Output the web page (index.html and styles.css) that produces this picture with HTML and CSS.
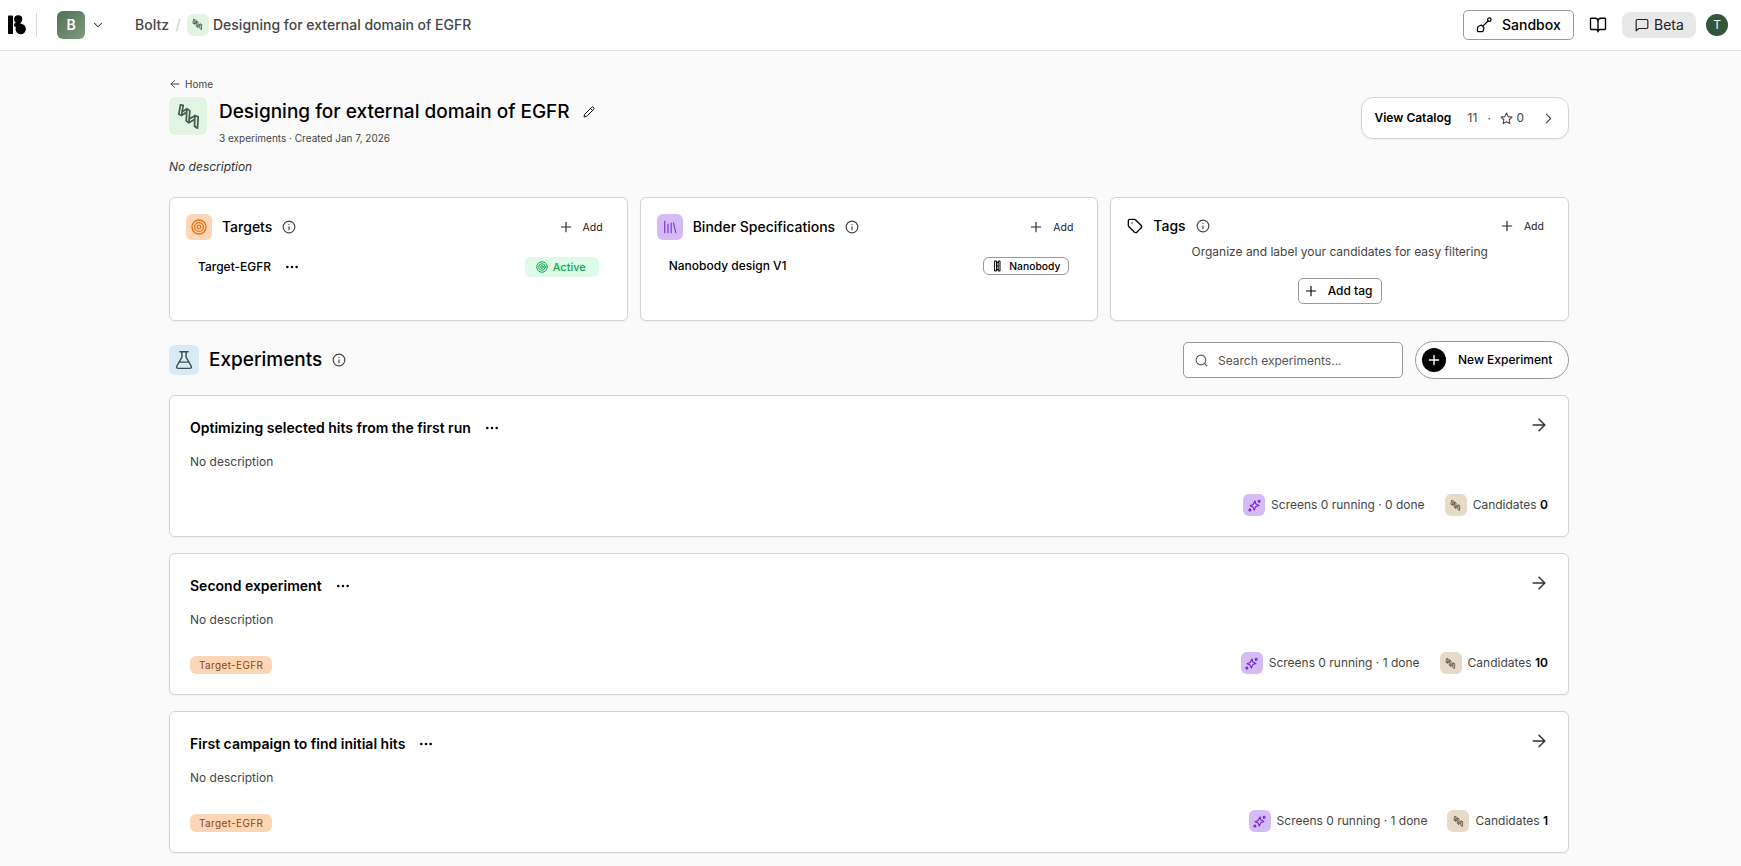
FILE: index.html
```html
<!DOCTYPE html>
<html lang="en">
<head>
  <meta charset="UTF-8">
  <meta name="viewport" content="width=device-width, initial-scale=1.0">
  <title>Designing for external domain of EGFR - Boltz</title>
  <link rel="stylesheet" href="styles.css">
</head>
<body>

  <!-- Icon set -->
  <svg class="sprite">
    <symbol id="i-helix" viewBox="0 0 24 24">
      <path d="M4.300 .8l2.600.6L5.300 11 2.700 9.800zM5.600 7.800l4.800-3.200M5.300 11l4.700-3M10.400 4.600l2.900 2-1 11.500-2.500-1.900zM13 14.200l5.100-3M12.300 18.100l5-3M18.100 11l3.200 1.300-.7 10.900-2.800-1.900z"/>
    </symbol>
    <symbol id="i-info" viewBox="0 0 24 24"><circle cx="12" cy="12" r="10"/><path d="M12 16.500V11.500M12 7.500h.01"/></symbol>
    <symbol id="i-plus" viewBox="0 0 24 24"><path d="M5 12h14M12 5v14"/></symbol>
    <symbol id="i-dots" viewBox="0 0 24 24"><circle cx="4" cy="12" r="1.200"/><circle cx="12" cy="12" r="1.200"/><circle cx="20" cy="12" r="1.200"/></symbol>
    <symbol id="i-target" viewBox="0 0 24 24"><circle cx="12" cy="12" r="10.500"/><circle cx="12" cy="12" r="6.600"/><circle cx="12" cy="12" r="2.700"/></symbol>
    <symbol id="i-arrow" viewBox="0 0 24 24"><path d="M5 12h14M12 5l7 7-7 7"/></symbol>
    <symbol id="i-spark" viewBox="0 0 24 24">
      <path d="M13 3.500l1 4.500a2 2 0 0 0 1.500 1.500L20 12l-4.500 1.500a2 2 0 0 0-1.500 1.500L11.500 20.500 10 16a2 2 0 0 0-1.500-1.500L4 12.500 8.500 10.500A2 2 0 0 0 10 9z"/>
      <circle cx="20.500" cy="4" r="1.800"/><circle cx="3.500" cy="20.500" r="1.800"/>
    </symbol>
  </svg>

  <header class="topbar">
    <svg class="logo" viewBox="0 0 18 20"><rect x="0" y="0.500" width="5" height="18.500" rx="0.800"/><circle cx="10.200" cy="4.300" r="4.100"/><circle cx="12.700" cy="14" r="5.200"/><circle cx="7.800" cy="10" r="1.900"/><path d="M8 6h4l1 4-4 3-1.500-2z"/></svg>
    <div class="divider"></div>
    <div class="org">B</div>
    <svg class="icon caret" viewBox="0 0 24 24"><path d="M5 8.500l7 7 7-7"/></svg>
    <nav class="crumbs">
      <span class="crumb-org">Boltz</span>
      <span class="slash">/</span>
      <span class="tile tile-sm green"><svg class="icon"><use href="#i-helix"/></svg></span>
      <span class="crumb-name">Designing for external domain of EGFR</span>
    </nav>
    <button class="sandbox">
      <svg class="icon" viewBox="0 0 24 24"><circle cx="20" cy="4" r="2.600"/><path d="M18 6l-7 7M8 12l4 4-1 4.500a2 2 0 0 1-1.500 1.500H4a2 2 0 0 1-2-2l.5-4A2 2 0 0 1 4 14z"/></svg>
      <span>Sandbox</span>
    </button>
    <svg class="icon book" viewBox="0 0 24 24"><path d="M12 7v14M3 18a1 1 0 0 1-1-1V4a1 1 0 0 1 1-1h5a4 4 0 0 1 4 4 4 4 0 0 1 4-4h5a1 1 0 0 1 1 1v13a1 1 0 0 1-1 1h-6a3 3 0 0 0-3 3 3 3 0 0 0-3-3z"/></svg>
    <button class="beta">
      <svg class="icon" viewBox="0 0 24 24"><path d="M22 16a2 2 0 0 1-2 2H6.500L2 22V4.500a2 2 0 0 1 2-2h16a2 2 0 0 1 2 2z"/></svg>
      <span>Beta</span>
    </button>
    <div class="avatar">T</div>
  </header>

  <main class="page">
    <a class="back"><svg class="icon" viewBox="0 0 24 24"><path d="M20 12H4M11 5l-7 7 7 7"/></svg><span>Home</span></a>

    <section class="project">
      <span class="tile tile-lg green"><svg class="icon"><use href="#i-helix"/></svg></span>
      <div class="project-info">
        <div class="project-title">
          <h1>Designing for external domain of EGFR</h1>
          <svg class="icon pencil" viewBox="0 0 24 24"><path d="M21.200 6.800a2.800 2.800 0 0 0-4-4L3.800 16.200a2 2 0 0 0-.5.8L2 21.400a.5.5 0 0 0 .6.600L7 20.700a2 2 0 0 0 .8-.5zM15 5l4 4"/></svg>
        </div>
        <p>3 experiments · Created Jan 7, 2026</p>
      </div>
      <button class="catalog">
        <strong>View Catalog</strong>
        <span class="cat-count">11</span>
        <span class="cat-dot">·</span>
        <svg class="icon star" viewBox="0 0 24 24"><path d="M12 2l3 6.500 7 .9-5.100 4.900 1.300 7.100L12 18l-6.200 3.400 1.300-7.100L2 9.400l7-.9z"/></svg>
        <span class="cat-stars">0</span>
        <svg class="icon next" viewBox="0 0 24 24"><path d="M8 4l8 8-8 8"/></svg>
      </button>
    </section>

    <p class="description">No description</p>

    <section class="panels">
      <div class="card panel">
        <div class="panel-head">
          <span class="tile tile-md orange"><svg class="icon"><use href="#i-target"/></svg></span>
          <h2>Targets</h2>
          <svg class="icon info"><use href="#i-info"/></svg>
          <button class="add"><svg class="icon"><use href="#i-plus"/></svg><span>Add</span></button>
        </div>
        <div class="panel-row">
          <span class="row-name">Target-EGFR</span>
          <svg class="icon dots"><use href="#i-dots"/></svg>
          <span class="active"><svg class="icon"><use href="#i-target"/></svg><span>Active</span></span>
        </div>
      </div>

      <div class="card panel">
        <div class="panel-head">
          <span class="tile tile-md purple"><svg class="icon books" viewBox="0 0 24 24"><path d="M3 2v20M8.500 7v15M14 5v17M18 5l4 17"/></svg></span>
          <h2>Binder Specifications</h2>
          <svg class="icon info"><use href="#i-info"/></svg>
          <button class="add"><svg class="icon"><use href="#i-plus"/></svg><span>Add</span></button>
        </div>
        <div class="panel-row spec-row">
          <span class="row-name">Nanobody design V1</span>
          <span class="nanobody"><svg class="icon" viewBox="0 0 14 24"><path d="M2 2h3v20H2zM9 2h3v20H9zM5 5h4M5 12h4M5 19h4"/></svg><span>Nanobody</span></span>
        </div>
      </div>

      <div class="card panel">
        <div class="panel-head tags-head">
          <svg class="icon tag" viewBox="0 0 24 24"><path d="M12.600 2.600A2 2 0 0 0 11.200 2H4a2 2 0 0 0-2 2v7.200a2 2 0 0 0 .6 1.400l8.700 8.700a2.400 2.400 0 0 0 3.400 0l6.600-6.600a2.400 2.400 0 0 0 0-3.400zM7.500 7.500h.01"/></svg>
          <h2>Tags</h2>
          <svg class="icon info"><use href="#i-info"/></svg>
          <button class="add"><svg class="icon"><use href="#i-plus"/></svg><span>Add</span></button>
        </div>
        <p class="tags-text">Organize and label your candidates for easy filtering</p>
        <button class="add-tag"><svg class="icon"><use href="#i-plus"/></svg><span>Add tag</span></button>
      </div>
    </section>

    <section class="exp-head">
      <span class="tile tile-flask blue"><svg class="icon" viewBox="0 0 24 24"><path d="M7 2h10M9.500 2v6.500L3.300 19.500a1.700 1.700 0 0 0 1.500 2.500h14.400a1.700 1.700 0 0 0 1.500-2.500L14.500 8.500V2M6.300 14.500h11.400"/></svg></span>
      <h2>Experiments</h2>
      <svg class="icon info"><use href="#i-info"/></svg>
      <div class="search">
        <svg class="icon" viewBox="0 0 24 24"><circle cx="11" cy="11" r="9"/><path d="M22 22l-4.600-4.600"/></svg>
        <span>Search experiments...</span>
      </div>
      <button class="new-exp"><span class="new-plus"><svg class="icon"><use href="#i-plus"/></svg></span><span class="new-label">New Experiment</span></button>
    </section>

    <section class="experiments">
      <article class="card exp">
        <div class="exp-top"><h3>Optimizing selected hits from the first run</h3><svg class="icon dots"><use href="#i-dots"/></svg><svg class="icon go"><use href="#i-arrow"/></svg></div>
        <p>No description</p>
        <div class="exp-foot">
          <div class="stats">
            <span class="tile tile-sm purple"><svg class="icon spark"><use href="#i-spark"/></svg></span>
            <span class="screens">Screens 0 running · 0 done</span>
            <span class="tile tile-sm tan"><svg class="icon"><use href="#i-helix"/></svg></span>
            <span class="cands">Candidates <b>0</b></span>
          </div>
        </div>
      </article>

      <article class="card exp">
        <div class="exp-top"><h3>Second experiment</h3><svg class="icon dots"><use href="#i-dots"/></svg><svg class="icon go"><use href="#i-arrow"/></svg></div>
        <p>No description</p>
        <div class="exp-foot">
          <span class="target-badge">Target-EGFR</span>
          <div class="stats">
            <span class="tile tile-sm purple"><svg class="icon spark"><use href="#i-spark"/></svg></span>
            <span class="screens">Screens 0 running · 1 done</span>
            <span class="tile tile-sm tan"><svg class="icon"><use href="#i-helix"/></svg></span>
            <span class="cands">Candidates <b>10</b></span>
          </div>
        </div>
      </article>

      <article class="card exp">
        <div class="exp-top"><h3>First campaign to find initial hits</h3><svg class="icon dots"><use href="#i-dots"/></svg><svg class="icon go"><use href="#i-arrow"/></svg></div>
        <p>No description</p>
        <div class="exp-foot">
          <span class="target-badge">Target-EGFR</span>
          <div class="stats">
            <span class="tile tile-sm purple"><svg class="icon spark"><use href="#i-spark"/></svg></span>
            <span class="screens">Screens 0 running · 1 done</span>
            <span class="tile tile-sm tan"><svg class="icon"><use href="#i-helix"/></svg></span>
            <span class="cands">Candidates <b>1</b></span>
          </div>
        </div>
      </article>
    </section>
  </main>

</body>
</html>
```
FILE: styles.css
```css
/* Global Styles */
* {
  box-sizing: border-box;
}

body {
  margin: 0;
  height: 866px;
  overflow: hidden;
  background: #fafafa;
  color: #000;
  font-family: Inter, sans-serif;
  font-size: 12px;
}

h1, h2, h3, p {
  margin: 0;
  white-space: nowrap;
}

span, strong {
  white-space: nowrap;
}

button {
  display: flex;
  align-items: center;
  padding: 0;
  border: none;
  background: #fff;
  color: #000;
  font-family: inherit;
}

.sprite {
  display: none;
}

.icon {
  flex: none;
  width: 16px;
  height: 16px;
  fill: none;
  stroke: currentColor;
  stroke-width: 2;
  stroke-linecap: round;
  stroke-linejoin: round;
}

/* Coloured icon tiles */
.tile {
  display: flex;
  flex: none;
  align-items: center;
  justify-content: center;
  border-radius: 6px;
}

.tile-sm {
  width: 22px;
  height: 22px;
}

.tile-sm .icon {
  width: 11px;
  height: 11px;
}

.tile-sm .spark {
  width: 13px;
  height: 13px;
}

.tile-md {
  width: 26px;
  height: 26px;
}

.tile-md .books {
  width: 14px;
  height: 14px;
  stroke-width: 1.700;
}

.tile-lg {
  width: 38px;
  height: 38px;
}

.tile-lg .icon {
  width: 25px;
  height: 25px;
  stroke-width: 1.700;
}

.tile-flask {
  width: 30px;
  height: 30px;
}

.tile-flask .icon {
  width: 20px;
  height: 20px;
  stroke-width: 1.700;
}

.green { background: #e3f4e3; color: #46604b; }
.orange { background: #ffd6b5; color: #ea7317; }
.purple { background: #d5bbf4; color: #6d1fd0; }
.blue { background: #d8ebf3; color: #3f4c52; }
.tan { background: #e6dac9; color: #65584a; }

/* Top bar */
.topbar {
  display: flex;
  align-items: center;
  height: 51px;
  padding: 0 13px 1px 8px;
  border-bottom: 1px solid #e4e4e4;
  background: #fff;
}

.logo {
  width: 18px;
  height: 20px;
  margin-top: 1px;
  fill: #000;
}

.divider {
  width: 1px;
  height: 24px;
  margin: 0 20px 0 10px;
  background: #d9d9d9;
}

.org {
  width: 28px;
  height: 28px;
  border-radius: 6px;
  background: linear-gradient(135deg, #4f7153, #7d9a80);
  color: #fff;
  font-size: 14px;
  font-weight: 600;
  line-height: 28px;
  text-align: center;
}

.caret {
  width: 12px;
  height: 12px;
  margin: 0 31px 0 7px;
}

.crumbs {
  display: flex;
  align-items: center;
  color: #454545;
  font-size: 14px;
  font-weight: 500;
}

.slash {
  width: 18px;
  color: #d0d0d0;
  text-align: center;
}

.crumb-name {
  margin-left: 4px;
}

.sandbox {
  width: 111px;
  height: 30px;
  margin-left: auto;
  padding-left: 12px;
  border: 1px solid #999;
  border-radius: 5px;
  font-size: 14px;
  font-weight: 500;
}

.sandbox .icon {
  stroke-width: 1.800;
}

.sandbox span {
  margin-left: 10px;
}

.book {
  width: 18px;
  height: 18px;
  margin: 0 15px;
  stroke-width: 1.800;
}

.beta {
  width: 74px;
  height: 26px;
  margin-right: 10px;
  padding-left: 13px;
  border-radius: 8px;
  background: #e8e8e8;
  color: #222;
  font-size: 14px;
}

.beta .icon {
  width: 14px;
  height: 14px;
  margin-right: 5px;
}

.avatar {
  width: 22px;
  height: 22px;
  border-radius: 50%;
  background: #33553a;
  color: #fff;
  font-size: 12px;
  line-height: 22px;
  text-align: center;
}

/* Page */
.page {
  width: 1400px;
  margin-left: 169px;
}

.back {
  display: flex;
  align-items: center;
  height: 16px;
  margin-top: 25px;
  color: #454545;
  font-size: 10px;
}

.back .icon {
  width: 12px;
  height: 12px;
  margin-right: 4px;
}

.project {
  display: flex;
  align-items: flex-start;
  height: 49px;
  margin-top: 5px;
}

.project-info {
  margin-left: 12px;
}

.project-title {
  display: flex;
  align-items: center;
  height: 29px;
}

.project-title h1 {
  font-size: 19px;
  font-weight: 500;
}

.pencil {
  width: 12px;
  height: 12px;
  margin-left: 13px;
}

.project-info p {
  margin-top: 5px;
  color: #454545;
  font-size: 10px;
  line-height: 14px;
}

.catalog {
  width: 208px;
  height: 42px;
  margin-left: auto;
  padding-left: 12.5px;
  border: 1px solid #d4d4d4;
  border-radius: 12px;
  box-shadow: 0 1px 2px rgba(0, 0, 0, 0.05);
  color: #454545;
  font-size: 12px;
}

.catalog strong {
  width: 93px;
  padding-bottom: 1px;
  color: #000;
  font-weight: 600;
  text-align: left;
}

.cat-count {
  width: 20px;
  padding-bottom: 1px;
  text-align: left;
}

.cat-dot {
  width: 12px;
  text-align: left;
}

.star {
  width: 13px;
  height: 13px;
}

.cat-stars {
  width: 22px;
  margin-left: 4px;
  padding-bottom: 1px;
  text-align: left;
}

.next {
  width: 13px;
  height: 13px;
  margin-left: 3px;
}

.description {
  height: 16px;
  margin: 13px 0 22px;
  color: #333;
  font-size: 12px;
  font-style: italic;
  line-height: 16px;
}

.card {
  border: 1px solid #d4d4d4;
  border-radius: 6px;
  background: #fff;
  box-shadow: 0 1px 2px rgba(0, 0, 0, 0.05);
}

/* Targets, binders and tags */
.panels {
  display: grid;
  grid-template-columns: repeat(3, 1fr);
  gap: 12px;
}

.panel {
  height: 124px;
  padding: 16px;
}

.panel-head {
  display: flex;
  align-items: center;
  height: 26px;
}

.panel-head h2 {
  margin-left: 10px;
  padding-bottom: 2px;
  font-size: 14px;
  font-weight: 500;
}

.info {
  width: 14px;
  height: 14px;
  margin-left: 10px;
  color: #454545;
}

.add {
  margin: 0 8px 0 auto;
  color: #222;
  font-size: 10.5px;
}

.add .icon {
  margin-right: 9px;
  stroke-width: 1.700;
}

.panel-row {
  display: flex;
  align-items: center;
  height: 20px;
  margin-top: 17px;
  padding: 0 12px;
}

.row-name {
  padding-bottom: 1px;
  font-size: 12px;
  font-weight: 500;
}

.dots {
  width: 14px;
  height: 14px;
  margin-left: 14px;
}

.active {
  display: flex;
  align-items: center;
  width: 74px;
  height: 20px;
  margin-left: auto;
  padding-left: 11px;
  border-radius: 6px;
  background: #dcfce7;
  color: #16a34a;
  font-size: 11px;
  font-weight: 500;
}

.active .icon {
  width: 12px;
  height: 12px;
  margin-right: 5px;
}

.spec-row {
  height: 18px;
}

.nanobody {
  display: flex;
  align-items: center;
  width: 86px;
  height: 18px;
  margin-left: auto;
  padding-left: 10px;
  border: 1px solid #999;
  border-radius: 6px;
  font-size: 10.3px;
  font-weight: 500;
}

.nanobody .icon {
  width: 7px;
  height: 12px;
  margin-right: 8px;
}

.tags-head {
  height: 24px;
}

.tags-text {
  margin-top: 6px;
  color: #454545;
  font-size: 12px;
  line-height: 16px;
  text-align: center;
}

.add-tag {
  width: 84px;
  height: 26px;
  margin: 18px auto 0;
  padding-left: 4px;
  border: 1px solid #999;
  border-radius: 5px;
  font-size: 12px;
  font-weight: 500;
}

.add-tag span {
  padding-bottom: 1px;
}

.add-tag .icon {
  margin-right: 9px;
  stroke-width: 1.700;
}

/* Experiments */
.exp-head {
  display: flex;
  align-items: center;
  height: 38px;
  margin: 20px 0 16px;
}

.exp-head h2 {
  margin-left: 10px;
  padding-bottom: 1px;
  font-size: 19px;
  font-weight: 500;
}

.search {
  display: flex;
  align-items: center;
  width: 220px;
  height: 36px;
  margin: 0 12px 0 auto;
  padding-left: 11px;
  border: 1px solid #999;
  border-radius: 5px;
  background: #fff;
  color: #555;
  font-size: 12px;
}

.search .icon {
  width: 13px;
  height: 13px;
  margin-right: 10px;
}

.new-exp {
  width: 154px;
  height: 38px;
  padding-left: 6px;
  border: 1px solid #999;
  border-radius: 19px;
  font-size: 12px;
  font-weight: 500;
}

.new-label {
  padding-bottom: 1px;
}

.new-plus {
  display: flex;
  align-items: center;
  justify-content: center;
  width: 24px;
  height: 24px;
  margin-right: 12px;
  border-radius: 50%;
  background: #000;
  color: #fff;
}

.experiments {
  display: flex;
  flex-direction: column;
  gap: 16px;
}

.exp {
  height: 142px;
  padding: 20px;
}

.exp-top {
  display: flex;
  align-items: center;
  height: 24px;
}

.exp-top h3 {
  padding-bottom: 2px;
  font-size: 14px;
  font-weight: 600;
}

.go {
  width: 20px;
  height: 20px;
  margin: -6px -1px 0 auto;
  color: #333;
  stroke-width: 1.800;
}

.exp p {
  margin-top: 14px;
  color: #454545;
  font-size: 12px;
  line-height: 16px;
}

.exp-foot {
  display: flex;
  align-items: flex-start;
  height: 26px;
  margin-top: 24px;
}

.target-badge {
  height: 18px;
  margin-top: 4px;
  padding: 0 9px;
  border-radius: 6px;
  background: #ffd6b5;
  color: #8a4510;
  font-size: 10px;
  letter-spacing: 0.35px;
  line-height: 18px;
}

.stats {
  display: flex;
  align-items: center;
  margin-left: auto;
  color: #454545;
  font-size: 12px;
}

.screens {
  margin: 0 20px 0 6px;
  padding-bottom: 1px;
}

.cands {
  margin-left: 6px;
  padding-bottom: 1px;
}

.cands b {
  color: #000;
  font-weight: 600;
}
```
